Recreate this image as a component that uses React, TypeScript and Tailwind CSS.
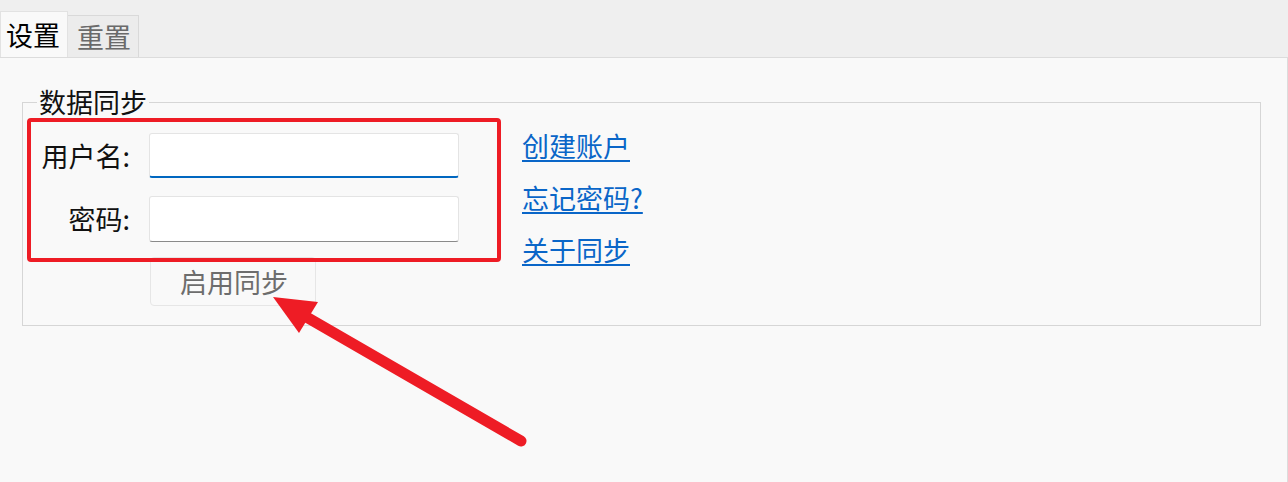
import React from "react";

const font = { fontFamily: '"Noto Sans CJK SC", "Noto Sans", sans-serif' };

function Annotation() {
  return (
    <svg className="pointer-events-none absolute inset-0" width="1288" height="482" viewBox="0 0 1288 482">
      <rect x="29" y="120" width="470" height="140" rx="2" fill="none" stroke="#ee1c25" strokeWidth="4" />
      <line x1="521" y1="441" x2="296" y2="311" stroke="#ee1c25" strokeWidth="11" strokeLinecap="round" />
      <polygon points="273,297 318,302 299,333" fill="#ee1c25" />
    </svg>
  );
}

export default function App() {
  return (
    <div style={font} className="relative flex h-[482px] w-full flex-col overflow-hidden bg-[#efefef] text-[27px] leading-[30px]">
      {/* tabs */}
      <div className="flex h-[57px] items-end">
        <div className="-mb-px flex h-[47px] w-[68px] items-center border border-b-0 border-[#e2e2e2] bg-[#f9f9f9] pl-[5px] text-black">
          设置
        </div>
        <div className="flex h-[42px] w-[71px] items-center border border-b-0 border-l-0 border-[#d9d9d9] bg-[#ececec] pl-[9px] text-[#6a6a6a]">
          重置
        </div>
      </div>

      <div className="flex-1 border-t border-r border-[#dcdcdc] bg-[#f9f9f9] pt-[29px] pl-[22px] pr-[26px]">
        <fieldset className="h-[239px] border border-[#d6d6d6]">
          <legend className="ml-[14px] px-[2px] leading-[30px] text-[#111]">数据同步</legend>
          <div className="flex pt-[16px]">
            <div className="flex flex-col">
              <div className="flex items-center">
                <span className="w-[107px] text-right text-[#111]">用户名:</span>
                <input className="ml-[19px] h-[45px] w-[310px] rounded-[3px] border border-b-2 border-[#e4e4e4] border-b-[#0067c0] bg-white outline-none" />
              </div>
              <div className="mt-[18px] flex items-center">
                <span className="w-[107px] text-right text-[#111]">密码:</span>
                <input type="password" className="ml-[19px] h-[46px] w-[310px] rounded-[3px] border border-[#e4e4e4] border-b-[#8a8a8a] bg-white outline-none" />
              </div>
              <div className="mt-[15px] pl-[127px]">
                <button className="h-[49px] w-[166px] rounded-[4px] border border-[#e6e6e6] bg-[#f9f9f9] pl-[2px] text-[#6d6d6d]">
                  启用同步
                </button>
              </div>
            </div>
            <div className="-mt-[2px] ml-[63px] flex flex-col gap-[22px] text-[#0a66c8]">
              <a href="#" className="underline underline-offset-[3px]">创建账户</a>
              <a href="#" className="underline underline-offset-[3px]">忘记密码?</a>
              <a href="#" className="underline underline-offset-[3px]">关于同步</a>
            </div>
          </div>
        </fieldset>
      </div>

      <Annotation />
    </div>
  );
}
